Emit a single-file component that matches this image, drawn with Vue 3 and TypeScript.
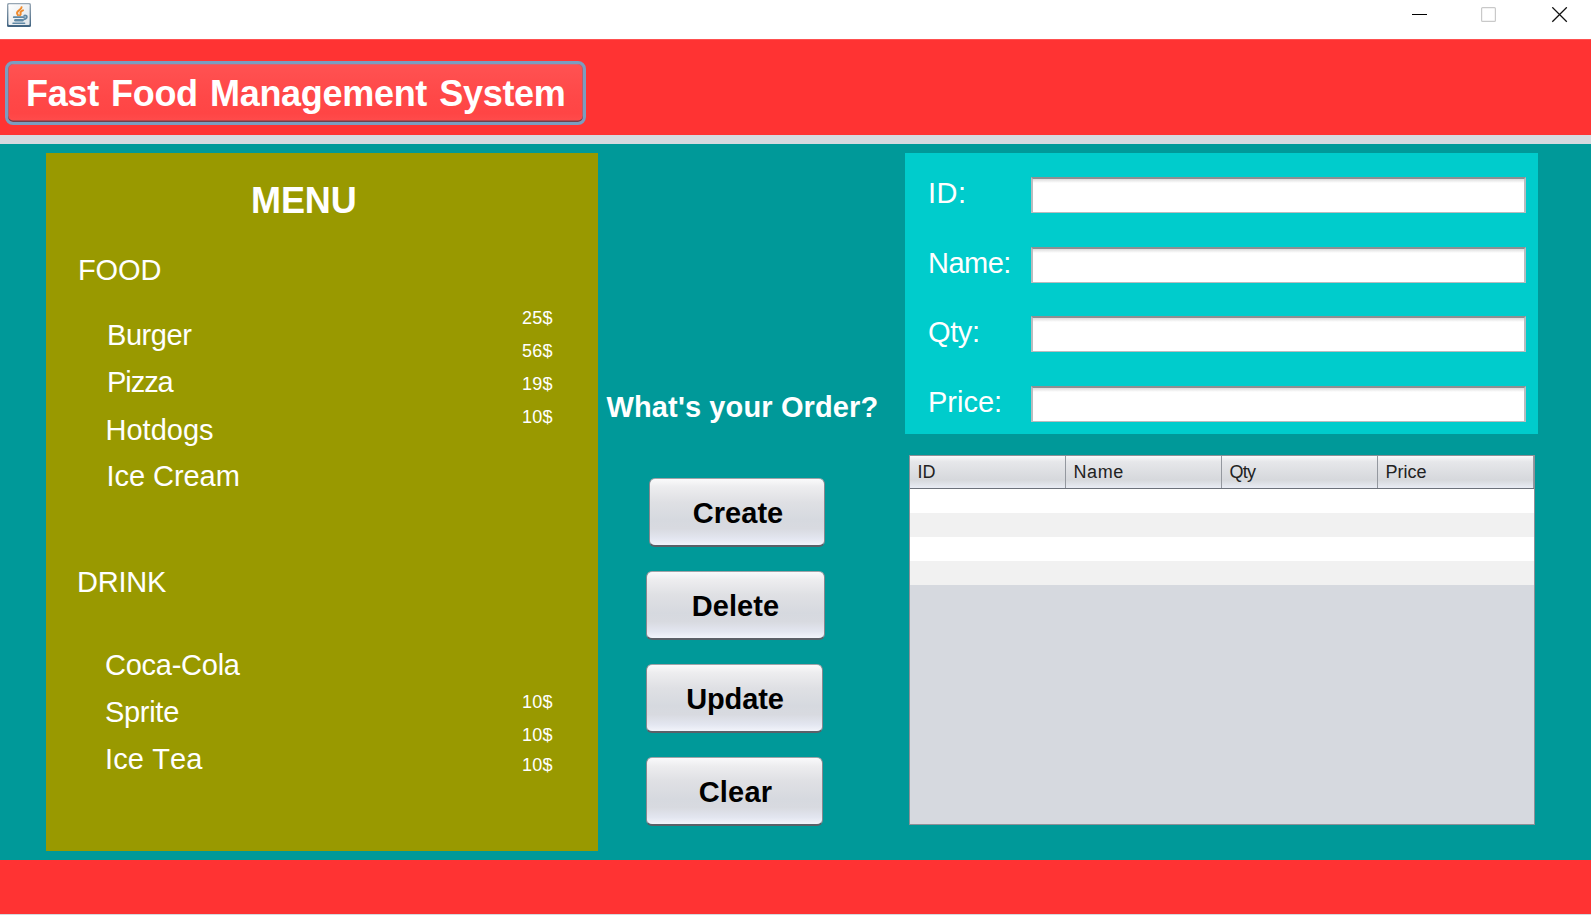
<script setup lang="ts">
import { reactive } from 'vue'

interface MenuLine {
  label: string
  cls: string
}

const food: MenuLine[] = [
  { label: 'Burger', cls: 'burger' },
  { label: 'Pizza', cls: 'pizza' },
  { label: 'Hotdogs', cls: 'hotdogs' },
  { label: 'Ice Cream', cls: 'ice-cream' },
]
const foodPrices: string[] = ['25$', '56$', '19$', '10$']

const drinks: MenuLine[] = [
  { label: 'Coca-Cola', cls: 'cola' },
  { label: 'Sprite', cls: 'sprite' },
  { label: 'Ice Tea', cls: 'ice-tea' },
]
const drinkPrices: string[] = ['10$', '10$', '10$']

const actions: string[] = ['Create', 'Delete', 'Update', 'Clear']
const columns: string[] = ['ID', 'Name', 'Qty', 'Price']
const order = reactive<Record<string, string>>({ ID: '', Name: '', Qty: '', Price: '' })
const emptyRows = 4
</script>

<template>
  <div class="window">
    <header class="titlebar">
      <svg class="app-icon" width="24" height="24" viewBox="0 0 24 24">
        <defs>
          <linearGradient id="frame" x1="0" y1="0" x2="0" y2="1">
            <stop offset="0" stop-color="#9aa9b6" />
            <stop offset="1" stop-color="#3f6280" />
          </linearGradient>
          <linearGradient id="face" x1="0" y1="0" x2="1" y2="1">
            <stop offset="0" stop-color="#ffffff" />
            <stop offset="1" stop-color="#dfe4e9" />
          </linearGradient>
        </defs>
        <rect x="0" y="0" width="24" height="24" rx="1.5" fill="url(#frame)" />
        <rect x="1.4" y="1.2" width="21.2" height="20.8" rx="1" fill="url(#face)" />
        <g fill="none" stroke="#f08a2c" stroke-width="2" stroke-linecap="round">
          <path d="M14.6 4.2c.2 2.4-4.4 3.2-4.6 5.6 0 1.2.8 1.6 1 2.5" />
          <path d="M16 7.4c-1.8.8-3 1.8-2.4 3 .4.9.1 1.3-.6 1.900" />
        </g>
        <g fill="none" stroke="#5f88a5" stroke-width="1.8" stroke-linecap="round">
          <path d="M6.8 14.2h10.2" />
          <path d="M8.3 17.2h7.2" stroke-width="2.4" />
          <path d="M17.3 12.6c3.6-.7 3.2 3-.3 3.8" />
          <path d="M6 20.3h11.6" stroke-width="1.5" />
        </g>
      </svg>
      <svg class="controls" width="160" height="17" viewBox="0 0 160 17">
        <path d="M0 7.5h15" stroke="#000" />
        <rect x="69.6" y=".6" width="13.8" height="13.8" rx="1" fill="none" stroke="#c9c9c9" stroke-width="1.2" />
        <path d="M140.3.3l14.5 14.5M154.8.3l-14.5 14.5" stroke="#111" stroke-width="1.3" />
      </svg>
    </header>

    <div class="banner">
      <button class="brand"><span>Fast Food Management System</span></button>
    </div>

    <main class="workspace">
      <section class="menu">
        <h1>MENU</h1>
        <h2 class="food-title">FOOD</h2>
        <div class="group food">
          <ul class="dishes">
            <li v-for="item in food" :key="item.label" :class="item.cls">{{ item.label }}</li>
          </ul>
          <ul class="prices">
            <li v-for="(price, i) in foodPrices" :key="i">{{ price }}</li>
          </ul>
        </div>
        <h2 class="drink-title">DRINK</h2>
        <div class="group drinks">
          <ul class="dishes">
            <li v-for="item in drinks" :key="item.label" :class="item.cls">{{ item.label }}</li>
          </ul>
          <ul class="prices">
            <li v-for="(price, i) in drinkPrices" :key="i">{{ price }}</li>
          </ul>
        </div>
      </section>

      <section class="ordering">
        <p class="question">What's your Order?</p>
        <div class="actions">
          <button v-for="a in actions" :key="a" class="action" :class="a.toLowerCase()">{{ a }}</button>
        </div>
      </section>

      <section class="records">
        <form class="form" @submit.prevent>
          <label v-for="c in columns" :key="c" class="field" :class="'f-' + c.toLowerCase()">
            <span>{{ c }}:</span>
            <input v-model="order[c]" type="text" />
          </label>
        </form>
        <div class="table">
          <div class="thead">
            <div v-for="c in columns" :key="c" class="th" :class="'h-' + c.toLowerCase()">{{ c }}</div>
          </div>
          <div v-for="n in emptyRows" :key="n" class="row"></div>
        </div>
      </section>
    </main>

    <footer class="footer"></footer>
  </div>
</template>

<style>
html,
body {
  margin: 0;
  overflow: hidden;
}
</style>

<style scoped>
.window {
  width: 1591px;
  height: 915px;
  display: flex;
  flex-direction: column;
  background: #d6d9df;
  font-family: "Liberation Sans", Arial, sans-serif;
  font-kerning: none;
  color: #fff;
  overflow: hidden;
}
.window * {
  box-sizing: border-box;
}
ul,
h1,
h2,
p {
  margin: 0;
  padding: 0;
  list-style: none;
}
button,
input {
  font-family: inherit;
  font-kerning: none;
}

.titlebar {
  flex: none;
  height: 39px;
  background: #fff;
  display: flex;
  justify-content: space-between;
  padding: 3px 19px 0 7px;
}
.controls {
  margin-top: 4px;
}

.banner {
  flex: none;
  height: 96px;
  background: #ff3333;
  border-top: 1px solid #ff5050;
  padding: 21px 0 0 5px;
}
.brand {
  display: block;
  width: 581px;
  height: 64px;
  padding: 0;
  border: 3px solid #7b9dc0;
  border-radius: 8px;
  background: linear-gradient(#ff5252, #ff4848 55%, #ff4545 85%, #ff4c4c);
  box-shadow: inset 0 -1.5px 0 #70434f, inset 1px 0 0 #b06272, inset -1px 0 0 #b06272, inset 0 1px 0 #d86672;
  color: #fff;
  font-size: 36px;
  font-weight: 700;
  letter-spacing: -0.3px;
  word-spacing: 2.5px;
  text-align: left;
}
.brand span {
  display: block;
  padding: 2px 0 0 18px;
  line-height: 56px;
  white-space: nowrap;
}

.workspace {
  flex: none;
  height: 725px;
  border-top: 9px solid #d6d9df;
  background: #009999;
  display: flex;
  padding: 9px 0 0 46px;
}

.menu {
  flex: none;
  width: 552px;
  height: 698px;
  background: #999900;
  padding-top: 28px;
}
h1 {
  font-size: 36px;
  line-height: 40px;
  letter-spacing: -0.1px;
  padding-left: 205px;
}
h2 {
  font-size: 29px;
  font-weight: 400;
  line-height: 40px;
}
.food-title {
  margin-top: 29px;
  padding-left: 32px;
  letter-spacing: -0.1px;
}
.drink-title {
  padding-left: 31px;
  letter-spacing: -0.2px;
}
.group {
  display: flex;
  align-items: flex-start;
}
.food {
  height: 272px;
  padding-top: 12px;
}
.drinks {
  padding-top: 40px;
}
.dishes {
  width: 476px;
  padding-left: 61px;
  font-size: 29px;
}
.dishes li {
  height: 47px;
  line-height: 47px;
}
.drinks .dishes {
  padding-left: 59px;
}
.food .dishes {
  padding-top: 10px;
}
.food .hotdogs {
  padding-top: 1px;
}
.drinks .prices {
  padding-top: 44px;
}
.prices {
  font-size: 18px;
  letter-spacing: 0.3px;
}
.prices li {
  height: 33px;
  line-height: 33px;
}
.drinks .prices li:last-child {
  margin-top: -3px;
}
.burger { letter-spacing: -0.45px; }
.pizza { letter-spacing: -1.05px; }
.hotdogs { letter-spacing: 0; text-indent: -1.5px; }
.ice-cream { letter-spacing: -0.05px; text-indent: -0.5px; }
.cola { letter-spacing: -0.25px; }
.sprite { letter-spacing: -0.3px; }
.ice-tea { letter-spacing: 0.1px; }

.ordering {
  flex: none;
  width: 307px;
  padding-top: 234px;
}
.question {
  padding-left: 8.5px;
  font-size: 29px;
  font-weight: 700;
  line-height: 40px;
  letter-spacing: 0.13px;
  white-space: nowrap;
}
.actions {
  display: flex;
  flex-direction: column;
  gap: 24px;
  padding: 51px 0 0 48px;
}
.action {
  width: 177px;
  height: 69px;
  padding: 3px 0 0 2px;
  border: 1px solid #85888f;
  border-top-color: #a0a3a8;
  border-bottom: 2px solid #5b6068;
  border-radius: 6px;
  background: linear-gradient(#fafafb 0, #ededef 12%, #dfe0e4 35%, #d6d9df 62%, #d8dae0 75%, #e3e6f0 90%, #f2f4fb 100%);
  color: #000;
  font-size: 29px;
  font-weight: 700;
  letter-spacing: 0.05px;
}
.create {
  margin-left: 3px;
  width: 176px;
}
.delete {
  width: 179px;
  padding-left: 0;
}
.update {
  letter-spacing: -0.1px;
  padding-left: 1px;
}
.clear {
  letter-spacing: 0.2px;
}

.form {
  width: 633px;
  height: 281px;
  background: #00cccc;
  padding: 24px 12px 0 23px;
}
.field {
  display: flex;
  align-items: flex-start;
  height: 69.5px;
  font-size: 29px;
}
.field span {
  width: 103.5px;
  line-height: 33px;
}
.field input {
  width: 495px;
  height: 36px;
  padding: 0 8px;
  border: 2px solid #b9bcbf;
  border-top-color: #8d8f92;
  border-bottom-width: 1.5px;
  background: linear-gradient(#dcdcdc, #fff 4px);
  outline: none;
  font-size: 20px;
}
.f-id span { letter-spacing: 0.5px; }
.f-name span { letter-spacing: -0.5px; }
.f-qty span { letter-spacing: -0.4px; }

.table {
  width: 626px;
  height: 370px;
  margin: 21px 0 0 4px;
  border: 1.5px solid #8c9097;
  background: #d6d9df;
}
.thead {
  display: flex;
  height: 33px;
  border-bottom: 1px solid #6c717b;
  background: linear-gradient(#fafafb 0, #e6e7ea 18%, #d6d8dc 75%, #e9ecf5 100%);
}
.th {
  width: 156px;
  padding-left: 7.5px;
  border-right: 1px solid #94989f;
  color: #222;
  font-size: 18px;
  line-height: 33px;
}
.h-name { letter-spacing: 0.6px; }
.h-qty { letter-spacing: -0.8px; }
.h-price { letter-spacing: 0; }
.row {
  height: 24px;
  background: #fff;
}
.row:nth-child(odd) {
  background: #f1f1f1;
}

.footer {
  flex: none;
  height: 54px;
  background: #ff3333;
}
</style>
